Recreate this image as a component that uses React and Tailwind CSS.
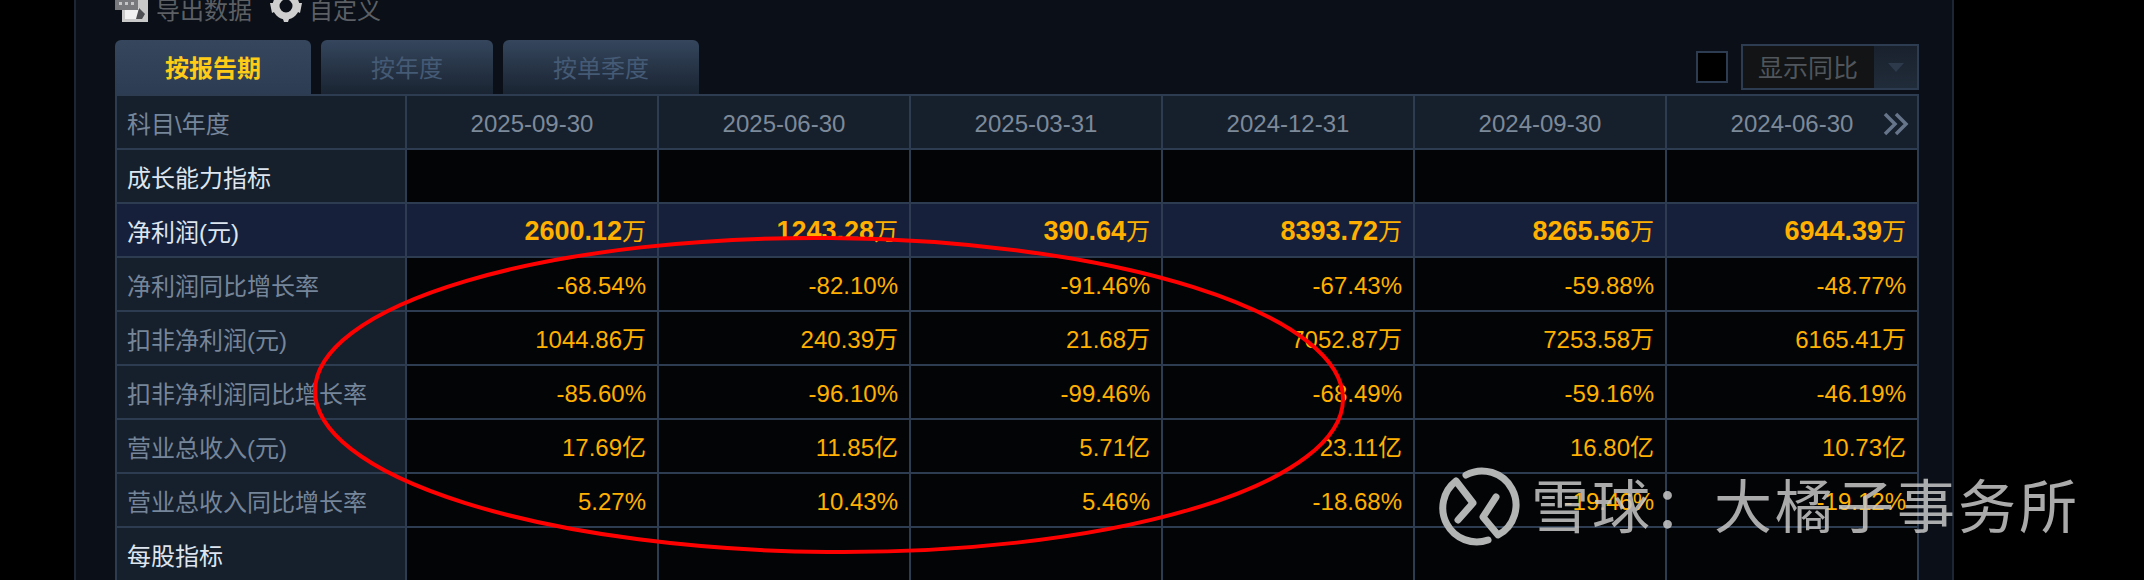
const dates = ['2025-09-30', '2025-06-30', '2025-03-31', '2024-12-31', '2024-09-30', '2024-06-30'];

const rows = [
  { label: '成长能力指标', kind: 'section' },
  { label: '净利润(元)', kind: 'main', values: ['2600.12万', '1243.28万', '390.64万', '8393.72万', '8265.56万', '6944.39万'] },
  { label: '净利润同比增长率', values: ['-68.54%', '-82.10%', '-91.46%', '-67.43%', '-59.88%', '-48.77%'] },
  { label: '扣非净利润(元)', values: ['1044.86万', '240.39万', '21.68万', '7052.87万', '7253.58万', '6165.41万'] },
  { label: '扣非净利润同比增长率', values: ['-85.60%', '-96.10%', '-99.46%', '-68.49%', '-59.16%', '-46.19%'] },
  { label: '营业总收入(元)', values: ['17.69亿', '11.85亿', '5.71亿', '23.11亿', '16.80亿', '10.73亿'] },
  { label: '营业总收入同比增长率', values: ['5.27%', '10.43%', '5.46%', '-18.68%', '-19.46%', '-19.12%'] },
  { label: '每股指标', kind: 'section' },
];

const ExportIcon = () => (
  <svg width="33" height="22" viewBox="0 0 33 22" className="shrink-0">
    <rect x="7" y="0" width="26" height="22" fill="#c9c9c9" />
    <rect x="10" y="8" width="14" height="11" fill="#f0f0f0" />
    <path d="M24 8l6 6-3 5h-6z" fill="#4d4f52" />
    <rect x="0" y="0" width="23" height="10" fill="#77797c" />
    <path d="M4 2h3v3H4zM10 2h3v3h-3zM16 2h3v3h-3z" fill="#c4c4c4" />
  </svg>
);

const GearIcon = () => (
  <svg width="32" height="22" viewBox="0 0 32 22" className="shrink-0">
    <circle cx="16" cy="6" r="10" fill="none" stroke="#cfcfcf" strokeWidth="7" />
    <path d="M12 16h8l-2 6h-4zM0 3h6l2 7-6 3zM32 3h-6l-2 7 6 3z" fill="#cfcfcf" />
  </svg>
);

const Logo = () => (
  <svg width="100" height="95" viewBox="0 0 100 95" fill="none" stroke="#b3b5b5" strokeWidth="7" strokeLinecap="round" strokeLinejoin="round">
    <path d="M36 15A34 34 0 0 1 68 75L53 57L66 37" />
    <path d="M28 60L43 43L26 21A34 34 0 0 0 58 80" />
  </svg>
);

export default function App() {
  return (
    <div className="relative h-[580px] w-[2144px] overflow-hidden bg-black font-['Liberation_Sans','Noto_Sans_CJK_SC',sans-serif] text-2xl">
      <div className="ml-[74px] h-[580px] w-[1880px] border-x-2 border-[#1c2635] bg-[#0b0f17] pl-[39px]">
        {/* toolbar */}
        <div className="flex h-[22px] items-center text-[#5c6065] leading-[22px]">
          <ExportIcon />
          <span className="ml-[8px]">导出数据</span>
          <span className="ml-[18px]"><GearIcon /></span>
          <span className="ml-[7px]">自定义</span>
        </div>

        {/* tabs */}
        <div className="mt-[18px] flex h-[54px] w-[1804px] items-end justify-between">
          <div className="flex gap-[10px]">
            <div className="flex h-[54px] w-[196px] items-center justify-center rounded-t-md bg-gradient-to-b from-[#35465d] to-[#2c3d53] pt-[3px] font-bold text-[#fecb16]">按报告期</div>
            <div className="flex h-[54px] w-[172px] items-center justify-center rounded-t-md bg-gradient-to-b from-[#35465d] to-[#1a2432] pt-[3px] text-[#455a75]">按年度</div>
            <div className="flex h-[54px] w-[196px] items-center justify-center rounded-t-md bg-gradient-to-b from-[#35465d] to-[#1a2432] pt-[3px] text-[#455a75]">按单季度</div>
          </div>
          <div className="mb-[4px] flex items-center gap-[13px]">
            <div className="h-[32px] w-[32px] border-2 border-[#2e3c52] bg-black" />
            <div className="flex h-[46px] w-[178px] border-2 border-[#2e3c52] bg-[#121416]">
              <div className="flex-1 pl-[15px] pt-[1px] text-[25px] leading-[42px] text-[#50565c]">显示同比</div>
              <div className="flex w-[43px] items-center justify-center bg-gradient-to-b from-[#19212d] to-[#212c3a]">
                <div className="h-0 w-0 border-x-[8px] border-t-[9px] border-x-transparent border-t-[#2c3a4b]" />
              </div>
            </div>
          </div>
        </div>

        {/* table */}
        <div className="grid w-[1804px] grid-cols-[288px_repeat(6,250px)] auto-rows-[52px] gap-[2px] bg-[#2e3c52] p-[2px]">
          <div className="flex items-center bg-[#161f2c] pl-[10px] pt-[5px] text-[#76869a]">科目\年度</div>
          {dates.map((d, i) => (
            <div key={d} className="relative flex items-center justify-center bg-[#161f2c] pt-[3px] text-[#7d8a9a]">
              {d}
              {i === 5 && (
                <svg width="26" height="24" viewBox="0 0 26 24" fill="none" stroke="#66758a" strokeWidth="3.5" className="absolute right-[8px] top-[16px]">
                  <path d="M2 2l10 10-10 10M13 2l10 10-10 10" />
                </svg>
              )}
            </div>
          ))}

          {rows.map((row) => (
            <Row key={row.label} row={row} />
          ))}
        </div>
      </div>

      {/* red hand-drawn mark */}
      <svg width="2144" height="580" className="pointer-events-none absolute left-0 top-0">
        <ellipse cx="829" cy="395" rx="514" ry="157" fill="none" stroke="#f00" strokeWidth="4" transform="rotate(0.5 829 395)" />
      </svg>

      {/* watermark */}
      <div className="pointer-events-none absolute left-[1430px] top-[460px] flex items-start">
        <Logo />
        <span className="ml-[1px] mt-[10px] text-[58px] leading-[76px] tracking-[3px] whitespace-nowrap text-[#c8c8c8]/85">雪球：大橘子事务所</span>
      </div>
    </div>
  );
}

function Row({ row }) {
  const isSection = row.kind === 'section';
  const isMain = row.kind === 'main';
  const labelBg = isMain ? 'bg-[#16203a]' : 'bg-[#161f2c]';
  const labelColor = isSection || isMain ? 'text-[#dde6f0]' : 'text-[#76869a]';
  const values = row.values || ['', '', '', '', '', ''];

  return (
    <>
      <div className={`flex items-center pl-[10px] pt-[5px] ${labelBg} ${labelColor}`}>{row.label}</div>
      {values.map((v, i) => (
        <div
          key={i}
          className={`flex items-center justify-end pr-[11px] pt-[3px] text-[#ffb000] ${isMain ? 'bg-[#16203a]' : 'bg-[#020406]'}`}
        >
          {isMain ? (
            <>
              <span className="text-[27px] font-bold">{v.slice(0, -1)}</span>
              <span>{v.slice(-1)}</span>
            </>
          ) : (
            v
          )}
        </div>
      ))}
    </>
  );
}
